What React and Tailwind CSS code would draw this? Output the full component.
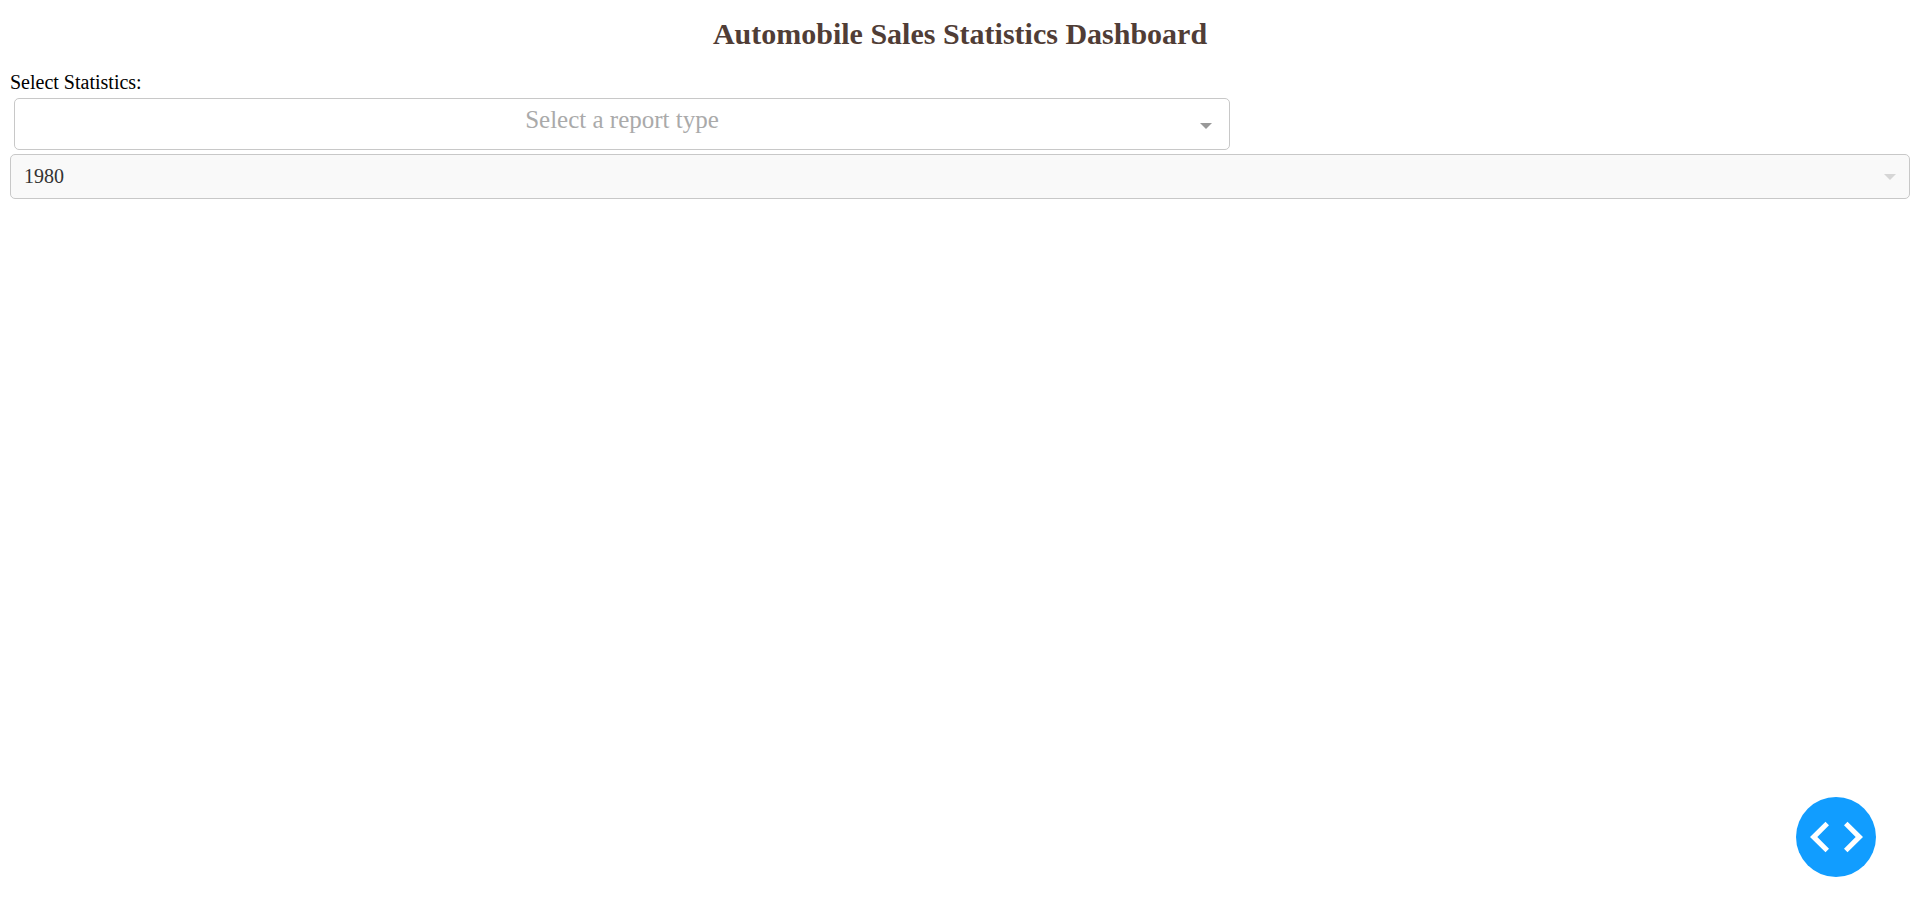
function Arrow({ className }) {
  return (
    <svg className={className} width="12" height="6" viewBox="0 0 12 6" fill="currentColor">
      <path d="M0 0H12L6 6Z" />
    </svg>
  );
}

export default function App() {
  return (
    <div className="relative flex h-[915px] w-full flex-col bg-white px-2.5 font-['Liberation_Serif','Times_New_Roman',serif] text-black">
      <h1 className="mt-[17px] text-center text-[30px] leading-[34px] font-bold text-[#503D36]">
        Automobile Sales Statistics Dashboard
      </h1>
      <label className="mt-[19px] block text-[20px] leading-[24px]">Select Statistics:</label>
      <button
        type="button"
        className="mt-[4px] ml-[4px] flex h-[52px] w-[1216px] items-center rounded-[5px] border border-[#c8c8c8] bg-white pr-[17px] pl-[29px]"
      >
        <span className="flex-1 pb-[9px] text-center text-[25px] leading-[30px] text-[#aaa]">
          Select a report type
        </span>
        <Arrow className="mt-[3px] text-[#999]" />
      </button>
      <button
        type="button"
        disabled
        className="mt-[4px] flex h-[45px] w-full items-center justify-between rounded-[5px] border border-[#c8c8c8] bg-[#f9f9f9] pr-[13px] pl-[13px] text-[20px] leading-[24px] text-[#333]"
      >
        <span className="pb-[2px]">1980</span>
        <Arrow className="text-[#d6d6d6]" />
      </button>
      <button
        type="button"
        aria-label="Toggle developer menu"
        className="absolute right-[44px] bottom-[38px] size-20 rounded-full bg-[#119DFF]"
      >
        <svg width="80" height="80" viewBox="0 0 80 80" fill="white">
          <path d="M14 40L29.5 24.8L33 28.3L21.3 40L33 51.7L29.5 55.2Z" />
          <path d="M67 40L51.5 24.8L48 28.3L59.7 40L48 51.7L51.5 55.2Z" />
        </svg>
      </button>
    </div>
  );
}
